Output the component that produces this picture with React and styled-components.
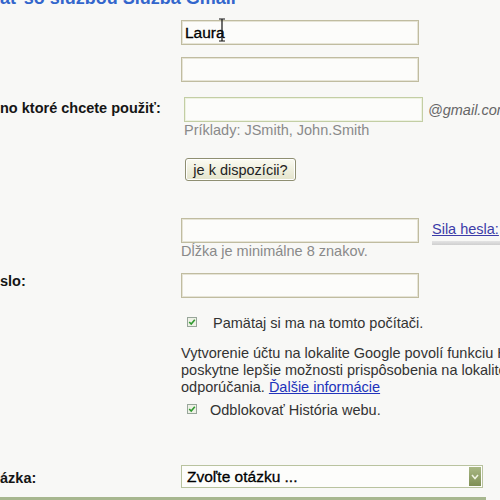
import React from "react";
import styled, { createGlobalStyle } from "styled-components";

const GlobalStyle = createGlobalStyle`
  body {
    margin: 0;
    background: #f8f8f6;
  }
`;

const Page = styled.div`
  width: 500px;
  height: 500px;
  overflow: hidden;
  background: #f8f8f6;
  display: flex;
  flex-direction: column;
  font-family: "Liberation Sans", Arial, sans-serif;
  font-size: 14.5px;
  color: #2e2e2e;
`;

const Title = styled.h1`
  margin: -11px 0 0 -31px;
  font-size: 18px;
  line-height: 18px;
  font-weight: bold;
  color: #3366cc;
  white-space: nowrap;
`;

const Row = styled.div`
  display: grid;
  grid-template-columns: 181px 1fr;
  align-items: start;
  margin-top: ${(p) => p.$top || 0}px;
`;

const Label = styled.div`
  font-weight: bold;
  color: #151515;
  line-height: 17px;
  padding-top: ${(p) => p.$pad || 0}px;
  white-space: nowrap;
`;

const Field = styled.div`
  display: flex;
  align-items: ${(p) => p.$align || "center"};
  white-space: nowrap;
  padding-left: ${(p) => p.$indent || 0}px;
`;

const Input = styled.div`
  box-sizing: border-box;
  width: ${(p) => p.$width || 238}px;
  height: 25px;
  border: 1px solid ${(p) => (p.$green ? "#c3cea4" : "#c0bca0")};
  box-shadow: inset 0 0 0 1px ${(p) => (p.$green ? "#eef2e2" : "#e6e4d6")};
  background: #fcfcfa;
  padding: 0 3px;
  font-size: 15.5px;
  line-height: 23px;
  color: #000;
  -webkit-text-stroke: 0.3px #000;
  position: relative;
`;

const Cursor = styled.svg`
  position: absolute;
  left: 36px;
  top: -3px;
`;

const Suffix = styled.span`
  margin-left: 5px;
  font-style: italic;
  color: #666;
`;

const Hint = styled.div`
  line-height: 17px;
  color: #8a8a8a;
  white-space: nowrap;
  padding-left: ${(p) => p.$indent || 0}px;
`;

const Button = styled.button`
  box-sizing: border-box;
  width: 111px;
  height: 23px;
  margin-left: 4px;
  padding: 0;
  border: 1px solid #8f8f72;
  border-radius: 3px;
  background: linear-gradient(#fbfbf2, #e4e4cc);
  box-shadow: inset 0 0 0 1px #ffffff;
  font-family: inherit;
  font-size: 14.5px;
  color: #222;
`;

const Strength = styled.div`
  box-sizing: border-box;
  height: 25px;
  display: flex;
  flex-direction: column;
  margin-left: 13px;
  padding-top: 3px;
  flex: 1;
`;

const Link = styled.a`
  color: ${(p) => p.$color || "#2233bb"};
  text-decoration: underline;
  line-height: 17px;
`;

const Meter = styled.div`
  flex: none;
  height: 4px;
  margin-top: 3px;
  background: linear-gradient(#e4e4e4, #cfcfcf);
`;

const CheckRow = styled.div`
  display: flex;
  align-items: flex-start;
  gap: ${(p) => p.$gap}px;
  padding-left: 6px;
  line-height: 17px;
  color: #333;
  white-space: nowrap;
`;

const Box = styled.svg`
  flex: none;
  margin-top: 2px;
`;

const Paragraph = styled.p`
  margin: 0;
  line-height: 17px;
  color: #333;
  white-space: nowrap;
`;

const Select = styled.div`
  box-sizing: border-box;
  width: 302px;
  height: 23px;
  display: flex;
  align-items: center;
  justify-content: space-between;
  border: 1px solid #b9c39f;
  background: #fdfdfb;
  padding: 0 1px 0 5px;
  font-size: 15.5px;
  color: #000;
  -webkit-text-stroke: 0.3px #000;
`;

const Arrow = styled.div`
  width: 12px;
  height: 19px;
  display: flex;
  align-items: center;
  justify-content: center;
  background: linear-gradient(#a9b884, #7f8f55);
`;

const BottomBar = styled.div`
  flex: none;
  width: 486px;
  height: 4px;
  margin-top: 9px;
  background: #a7b78f;
`;

function Check() {
  return (
    <Box width="10" height="10" viewBox="0 0 10 10">
      <rect x="0.5" y="0.5" width="9" height="9" fill="#eef1e6" stroke="#98a69a" />
      <path d="M2.2 5 L4.2 7 L7.8 2.8" fill="none" stroke="#2f9a2f" strokeWidth="1.6" />
    </Box>
  );
}

export default function App() {
  return (
    <Page>
      <GlobalStyle />
      <Title>Začať so službou Služba Gmail</Title>

      <Row $top={13}>
        <Label />
        <Field>
          <Input>
            Laura
            <Cursor width="8" height="25" viewBox="0 0 8 25">
              <path d="M1 1 H7 M4 1 V23 M1 23 H7" stroke="#111" strokeWidth="1.2" fill="none" />
            </Cursor>
          </Input>
        </Field>
      </Row>

      <Row $top={12}>
        <Label />
        <Field>
          <Input />
        </Field>
      </Row>

      <Row $top={15}>
        <Label $pad={3}>no ktoré chcete použiť:</Label>
        <Field $indent={3}>
          <Input $green $width={239} />
          <Suffix>@gmail.com</Suffix>
        </Field>
      </Row>
      <Row>
        <Label />
        <Hint $indent={3}>Príklady: JSmith, John.Smith</Hint>
      </Row>

      <Row $top={19}>
        <Label />
        <Field>
          <Button>je k dispozícii?</Button>
        </Field>
      </Row>

      <Row $top={37}>
        <Label />
        <Field $align="flex-start">
          <Input />
          <Strength>
            <Link href="#" $color="#3c3ca8">Sila hesla:</Link>
            <Meter />
          </Strength>
        </Field>
      </Row>
      <Row>
        <Label />
        <Hint>Dĺžka je minimálne 8 znakov.</Hint>
      </Row>

      <Row $top={13}>
        <Label $pad={0}>slo:</Label>
        <Field>
          <Input />
        </Field>
      </Row>

      <Row $top={17}>
        <Label />
        <CheckRow $gap={16}>
          <Check />
          Pamätaj si ma na tomto počítači.
        </CheckRow>
      </Row>

      <Row $top={12.5}>
        <Label />
        <Paragraph>
          Vytvorenie účtu na lokalite Google povolí funkciu História webu, ktorá vám
          <br />
          poskytne lepšie možnosti prispôsobenia na lokalite Google vrátane
          <br />
          odporúčania. <Link href="#">Ďalšie informácie</Link>
        </Paragraph>
      </Row>

      <Row $top={6}>
        <Label />
        <CheckRow $gap={13}>
          <Check />
          Odblokovať História webu.
        </CheckRow>
      </Row>

      <Row $top={46.5}>
        <Label $pad={5}>ázka:</Label>
        <Field>
          <Select>
            Zvoľte otázku ...
            <Arrow>
              <svg width="8" height="6" viewBox="0 0 8 6">
                <path d="M1 1 L4 4.5 L7 1" fill="none" stroke="#eef2e0" strokeWidth="1.6" />
              </svg>
            </Arrow>
          </Select>
        </Field>
      </Row>

      <BottomBar />
    </Page>
  );
}
